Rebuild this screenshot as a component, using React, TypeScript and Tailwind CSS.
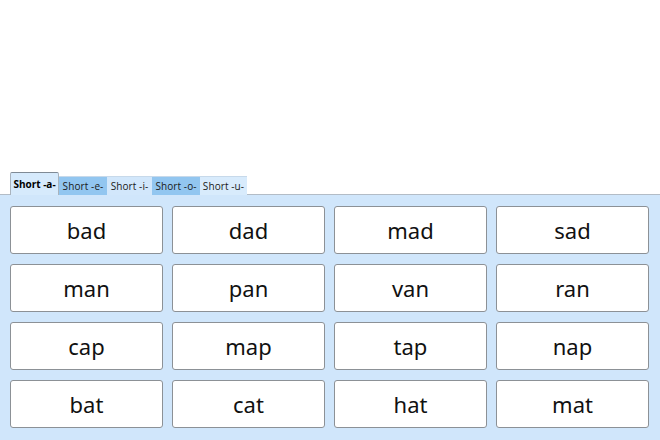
const tabs = [
  { label: 'Short -a-', bg: 'bg-[#d6eafc]', w: 'w-[49px]', active: true },
  { label: 'Short -e-', bg: 'bg-[#92c6f0]', w: 'w-[48px]' },
  { label: 'Short -i-', bg: 'bg-[#d2e7fb]', w: 'w-[45px]' },
  { label: 'Short -o-', bg: 'bg-[#92c6f0]', w: 'w-[48px]' },
  { label: 'Short -u-', bg: 'bg-[#d8ebfc]', w: 'w-[47px]' },
];

const words = [
  'bad', 'dad', 'mad', 'sad',
  'man', 'pan', 'van', 'ran',
  'cap', 'map', 'tap', 'nap',
  'bat', 'cat', 'hat', 'mat',
];

export default function App() {
  return (
    <div className="w-[660px] h-[440px] bg-white flex flex-col overflow-hidden">
      <div className="h-[172px]" />
      <div className="flex items-end pl-[10px] h-[23px] relative z-10 -mb-px">
        {tabs.map((t) =>
          t.active ? (
            <div
              key={t.label}
              className={`h-[23px] ${t.w} flex items-center justify-center border border-b-0 border-[#a9b3bd] border-t-[#7f8a95] rounded-t-[2px] ${t.bg} text-[10px] font-bold text-black`}
              style={{ fontFamily: '"Open Sans", sans-serif' }}
            >
              {t.label}
            </div>
          ) : (
            <div
              key={t.label}
              className={`h-[19px] ${t.w} flex items-center justify-center ${t.bg} border-t border-[#c7d9ea] text-[10px] tracking-[0.1px] text-[#1a1a1a]`}
              style={{ fontFamily: '"Open Sans", sans-serif' }}
            >
              {t.label}
            </div>
          )
        )}
      </div>
      <div className="flex-1 bg-[#d0e6fb] border-t border-[#b3bcc6] pt-[11px] pl-[10px] pr-[11px]">
        <div className="grid grid-cols-4 gap-x-[9px] gap-y-[10px]">
          {words.map((w) => (
            <div
              key={w}
              className="h-[48px] bg-white border border-[#8c9196] rounded-[3px] flex items-center justify-center text-[22px] text-[#111]"
              style={{ fontFamily: '"Noto Sans", sans-serif' }}
            >
              {w}
            </div>
          ))}
        </div>
      </div>
    </div>
  );
}
